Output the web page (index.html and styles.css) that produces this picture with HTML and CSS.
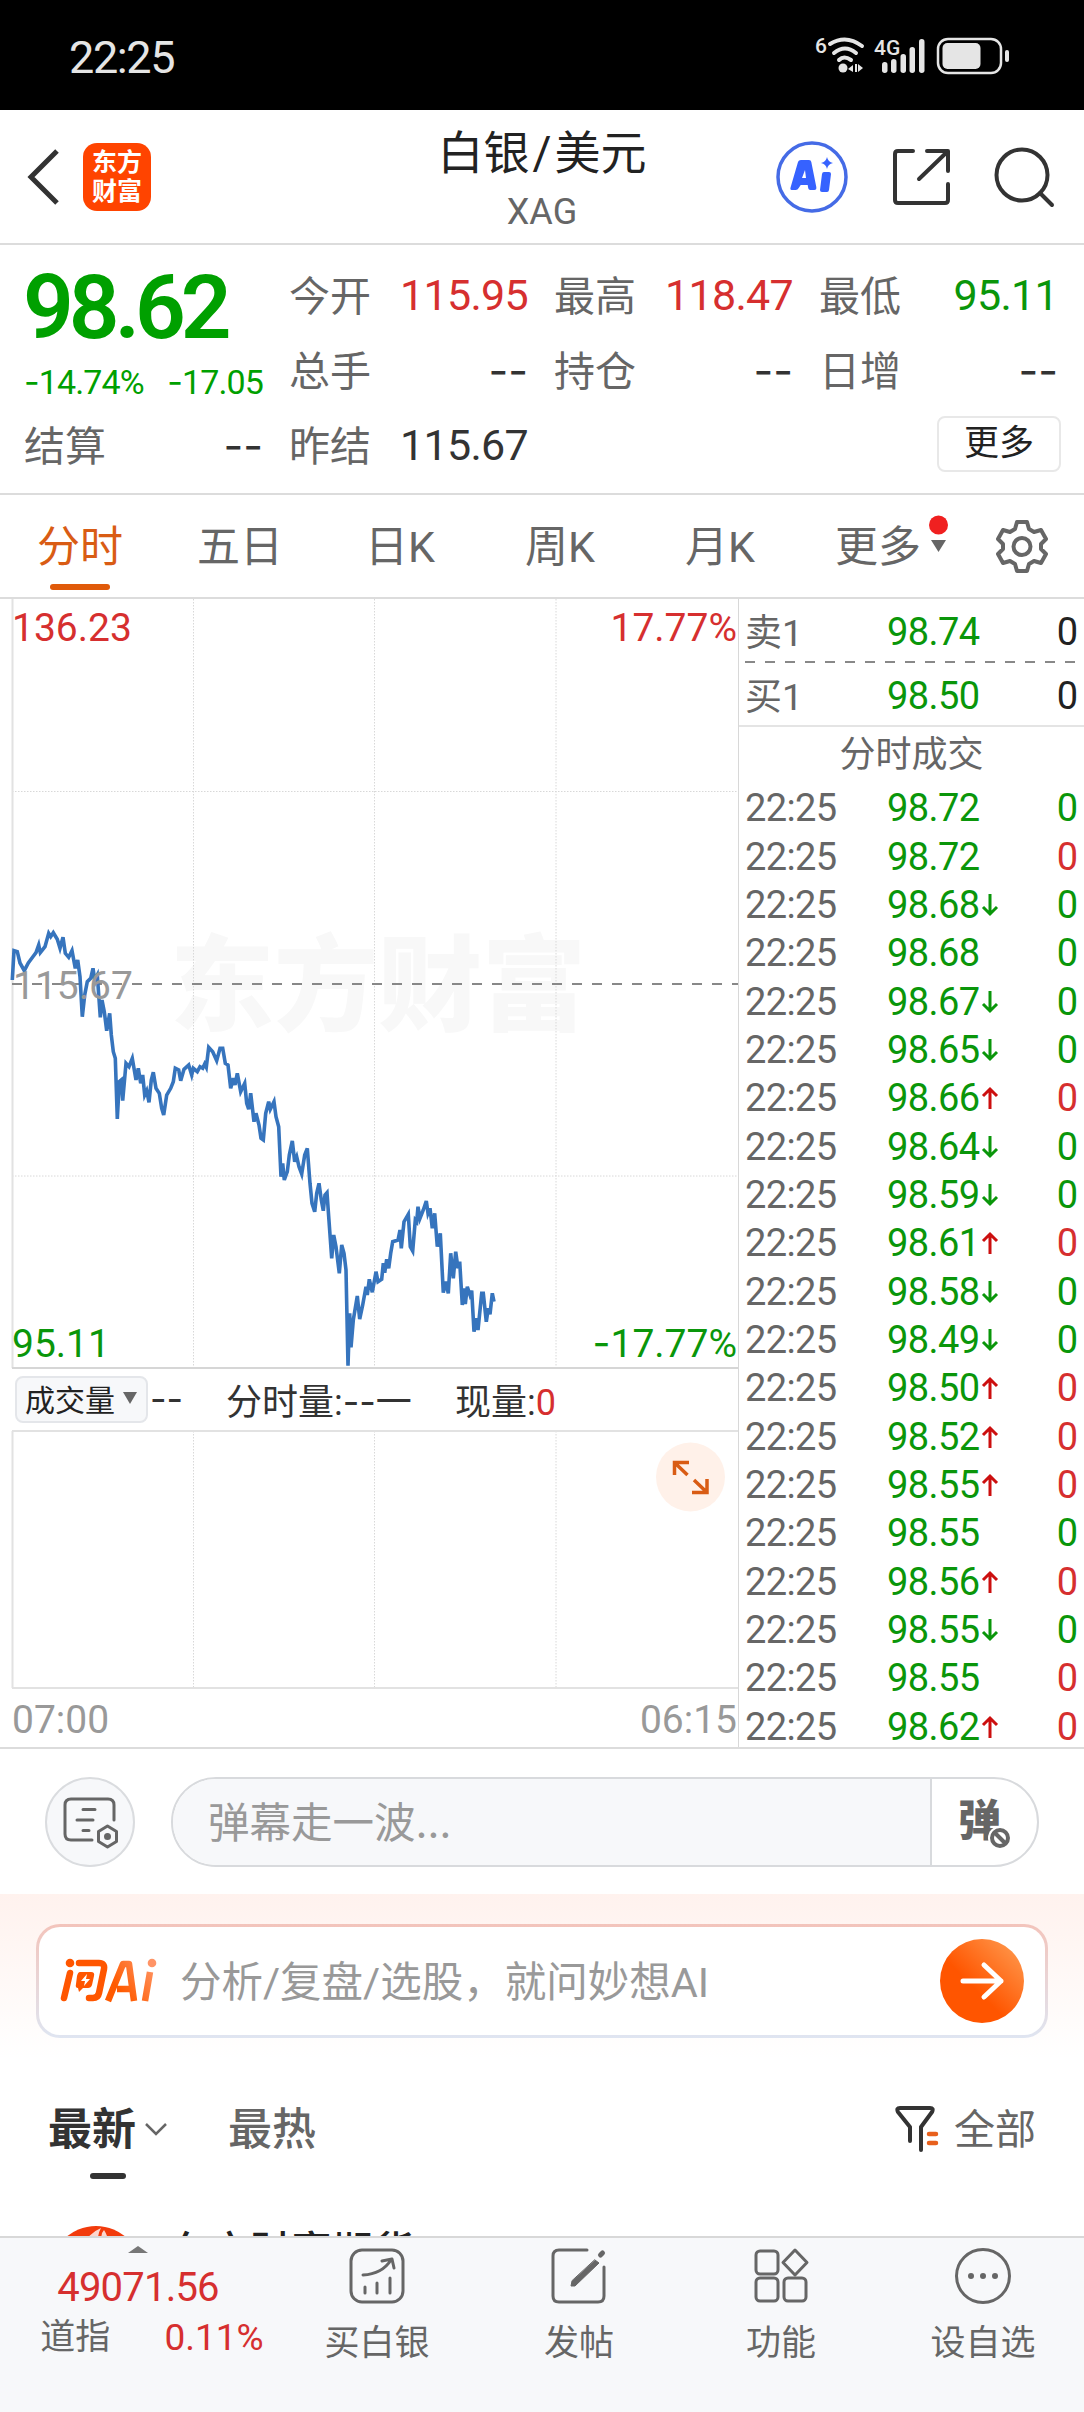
FILE: index.html
```html
<!DOCTYPE html>
<html lang="zh-CN">
<head>
    <meta charset="UTF-8">
    <meta name="viewport" content="width=device-width, initial-scale=1.0">
    <title>白银/美元 XAG</title>
    <link rel="stylesheet" href="styles.css">
</head>
<body>
    <div class="status">
        <span class="clock">22:25</span>
        <svg class="status-icons" width="200" height="44" viewBox="0 0 200 44" fill="#e5e5e5">
            <text x="-2" y="18" font-size="21" class="tiny">6</text>
            <g fill="none" stroke="#e5e5e5" stroke-width="4" stroke-linecap="round">
                <path d="M13 9Q29 -1 45 11M17 18Q28 9 39 18M22 25Q27 20 34 25" />
            </g>
            <circle cx="26" cy="33" r="4.5" />
            <path d="M31 34l5-4v7zM38 29h2v8h-2zM41 29l5 4-5 4z" />
            <text x="57" y="20" font-size="21" class="tiny">4G</text>
            <rect x="65" y="27" width="5.5" height="11" rx="2.7" />
            <rect x="74" y="24" width="5.5" height="14" rx="2.7" />
            <rect x="83.500" y="19" width="5.500" height="19" rx="2.7" />
            <rect x="92.500" y="12" width="5.500" height="26" rx="2.7" />
            <rect x="102" y="4" width="5.500" height="34" rx="2.7" />
            <rect x="121" y="4" width="63" height="34" rx="10" fill="none" stroke="#e5e5e5" stroke-width="2.500" />
            <rect x="125.500" y="8" width="38" height="26" rx="5" />
            <rect x="188" y="15" width="4" height="12" rx="2" />
        </svg>
    </div>

    <div class="header">
        <div class="header-side">
            <svg class="back" width="34" height="56" viewBox="0 0 34 56" fill="none" stroke="#333" stroke-width="5"><path d="M31 2L5 28l26 26" /></svg>
            <div class="logo"><span>东方</span><span>财富</span></div>
        </div>
        <div class="header-title">
            <h1>白银<i>/</i>美元</h1>
            <p>XAG</p>
        </div>
        <div class="header-side right">
            <svg width="72" height="72" viewBox="0 0 72 72" fill="#3662ff">
                <circle cx="36" cy="36" r="34" fill="none" stroke="#456be6" stroke-width="3.500" />
                <path fill-rule="evenodd" d="M25 19h8q2 0 2.300 2l5 25q.5 3-2 3h-4q-2 0-2.300-3l-.3-2h-7l-2 3q-1 2-3 2h-4q-2 0-1-3l7-24q.6-3 3.300-3zM29 29l-3 8h4z" />
                <path d="M48 31h5q2 0 2 2l-2 16q-.3 2-2 2h-5q-2 0-2-2l2-16q.3-2 2-2z" />
                <path d="M51 16q1 5 6 6-5 1-6 6-1-5-6-6 5-1 6-6z" />
            </svg>
            <svg width="60" height="60" viewBox="0 0 60 60" fill="none" stroke="#333" stroke-width="4" stroke-linecap="round" stroke-linejoin="round">
                <path d="M22 4H7q-3 0-3 3v46q0 3 3 3h47q3 0 3-3V37M36 4h21v20M56 5L28 32" />
            </svg>
            <svg width="62" height="62" viewBox="0 0 62 62" fill="none" stroke="#333" stroke-width="4" stroke-linecap="round">
                <circle cx="28" cy="29" r="25.500" /><path d="M46 47l12 12" />
            </svg>
        </div>
    </div>

    <div class="quote">
        <div class="price-block">
            <div class="price">98.62</div>
            <div class="change"><span><i class="minus">-</i>14.74%</span><span><i class="minus">-</i>17.05</span></div>
        </div>
        <div class="field f2"><label>今开</label><b class="up">115.95</b></div>
        <div class="field f3"><label>最高</label><b class="up">118.47</b></div>
        <div class="field f4"><label>最低</label><b class="down">95.11</b></div>
        <div class="field f2"><label>总手</label><b class="dash">--</b></div>
        <div class="field f3"><label>持仓</label><b class="dash">--</b></div>
        <div class="field f4"><label>日增</label><b class="dash">--</b></div>
        <div class="field f1"><label>结算</label><b class="dash">--</b></div>
        <div class="field f2"><label>昨结</label><b>115.67</b></div>
        <button class="more-button">更多</button>
    </div>

    <div class="tabs">
        <span class="tab active">分时</span>
        <span class="tab">五日</span>
        <span class="tab">日K</span>
        <span class="tab">周K</span>
        <span class="tab">月K</span>
        <span class="tab more">更多<svg width="20" height="40" viewBox="0 0 20 40"><circle cx="10.500" cy="10" r="9.500" fill="#f02020" /><path d="M3 25h15l-7.500 12z" fill="#666" /></svg></span>
        <svg class="gear" width="56" height="56" viewBox="0 0 56 56" fill="none" stroke="#666" stroke-width="4" stroke-linejoin="round">
            <path d="M23 4h10l2 7 5 3 7-2 5 9-5 5v5l5 5-5 9-7-2-5 3-2 7H23l-2-7-5-3-7 2-5-9 5-5v-5l-5-5 5-9 7 2 5-3z" />
            <circle cx="28" cy="28.500" r="8.500" />
        </svg>
    </div>

    <div class="market">
        <div class="charts">
            <svg class="line-chart" width="738" height="771" viewBox="0 0 738 771">
                <text x="170" y="424" class="watermark">东方财富</text>
                <path class="grid" d="M193.500 0V769M374.500 0V769M556 0V769M12 192.500H738M12 577H738" />
                <path class="axis" d="M12.500 0V769" />
                <path class="base" d="M12 769H738" />
                <path class="dashed" d="M12 385H738" />
                <polyline class="line" points="12.3,381 14,351.7 17.3,352.7 20,364 24.3,371.7 28.3,364 32.7,358 36,353.7 38.7,346 40.3,353.7 45,347.7 48.7,334.3 50.7,337.7 53.3,333.7 57.3,340.3 60,349.3 63,338.3 65.3,354.3 68.7,358.3 72,351.7 75.3,369.3 77.7,361 80,377.7 82.3,417.7 84.7,396 87.3,382.7 90.7,379.3 93,369.3 94.7,381 97.3,376 100.3,418.3 102,401 104.3,412.7 106.7,431.7 109.7,414.3 111.3,436 113.3,452.7 115.3,459.3 117.3,520 119.3,482.7 121.3,481 122.7,501.7 126,464.3 129,467.7 132.3,459.3 136,481 138.3,469.3 140.7,484.3 142.7,476 144.7,496 146.7,491.7 149,503.3 151.3,481 153.3,473.3 156,489.3 159.3,494.3 161.7,509.3 163.7,516 166.7,496 170.7,489.3 173.3,482.7 175.3,469.3 178.7,471 180.7,481.7 184,470.3 188.7,466 191.7,476 193.3,469.3 197.3,472.7 200,467.7 202.7,469.3 204.7,465 206.3,468.3 208.7,448.3 212.7,452.7 216.7,461.7 220,449.3 222.7,449.3 225.3,464.3 228,466 230.7,489.3 233.3,479.3 235,486 237.3,474.3 240.7,492.7 244.7,484.3 246.7,504.3 248.7,510.3 250.7,494.3 254,522.7 256,514.3 259,526 261,539.3 263.3,541 265.7,514.3 268.7,502.7 270.3,510.3 274,502.7 276,517.7 278.7,527.7 281,577.7 282.7,564.3 284.3,581 287.3,572.7 289.3,556 292.3,542 294.7,562.7 296.7,557.7 299,567.7 301.7,575 304.7,556 307.3,549.3 310,584.3 312,604.3 314.7,612.7 316.7,594.3 319,584.3 321.3,601 323.3,611.7 325,596 327,593.7 328.7,617.7 331.7,659.3 333.7,636 336,647.7 339.3,674.3 341.7,646 344,654.3 346,671 348,766.7 349.7,714.3 351,748.3 353.3,721 357.3,697 359.7,720 362.7,706 366,687.7 367.3,696 369.3,680.3 372.3,693.3 376,672.7 378,682.7 381.7,680.3 383.3,664.3 384.7,673.7 386.7,660.3 388.7,669.3 390.7,654.3 392.7,642.7 398,641 400,631 401.3,649.3 404,622.7 408.3,615.3 410.3,647.7 412.7,652 415.3,621 416.7,622.7 418,607.7 420,619.3 423.3,611 426.3,602 428,614.3 430,609.3 432.3,629.3 434.7,614.3 437.3,647.7 440.3,634.3 443.3,693.7 445.7,682.7 448.3,694.3 450.7,654.3 453.3,679.3 455.7,652.7 458,669.3 459.7,662.7 462.3,706 464,689.3 465.3,705 467.3,687.7 470,696 471.7,691.7 474,732.7 476,719.3 478,731 481.7,694.3 483.3,694.3 486.3,722.7 488.3,709.3 490,715.3 492.3,694.3 494,702.7" />
                <text x="12" y="42" class="num up">136.23</text>
                <text x="737" y="42" class="num up end">17.77%</text>
                <text x="13" y="400" class="num muted">115.67</text>
                <text x="12" y="758" class="num down">95.11</text>
                <text x="737" y="758" class="num down end"><tspan class="minus">-</tspan>17.77%</text>
            </svg>
            <div class="volume-head">
                <span class="select">成交量<i></i></span>
                <span class="vol-dash">--</span>
                <span class="vol-a">分时量:<i>--</i>一</span>
                <span class="vol-b">现量:<em>0</em></span>
            </div>
            <svg class="volume-chart" width="738" height="317" viewBox="0 0 738 317">
                <path class="grid" d="M193.500 1V258M374.500 1V258M556 1V258" />
                <path class="axis" d="M12.500 1V258M12 1H738M12 258H738" />
                <circle cx="690.500" cy="47" r="34.500" fill="#fff1e9" />
                <path d="M674.500 45V32.500H689M676 34l11.500 11M707 49V62.500H692M705.500 61L694 50" fill="none" stroke="#d95c14" stroke-width="3.500" />
                <text x="12" y="303" class="num muted">07:00</text>
                <text x="737" y="303" class="num muted end">06:15</text>
            </svg>
        </div>
        <div class="book">
            <div class="order"><span>卖1</span><b>98.74</b><em>0</em></div>
            <svg class="divider" width="345" height="2"><path d="M6 1H337" stroke="#888" stroke-width="2" stroke-dasharray="10 10" /></svg>
            <div class="order"><span>买1</span><b>98.50</b><em>0</em></div>
            <div class="book-title">分时成交</div>
            <div id="ticks"></div>
        </div>
    </div>

    <div class="danmu">
        <div class="danmu-set">
            <svg width="58" height="54" viewBox="0 0 58 54" fill="none" stroke="#666" stroke-width="3" stroke-linecap="round">
                <path d="M29 43H8q-6 0-6-6V8q0-6 6-6h37q6 0 6 6v15M20 12.500h12M14 23h16M20 33.500h6" />
                <path d="M44.500 29l9 5.500v10l-9 5.500-9-5.500v-10z" stroke-linejoin="round" /><circle cx="44.500" cy="39.500" r="2" fill="#666" />
            </svg>
        </div>
        <div class="danmu-box">
            <div class="danmu-input">弹幕走一波<i>…</i></div>
            <div class="danmu-off">弹<svg width="24" height="24" viewBox="0 0 24 24" fill="#fff"><circle cx="12" cy="12" r="12" /><circle cx="12" cy="12" r="8" stroke="#666" stroke-width="4" /><path d="M7 7l10 10" stroke="#666" stroke-width="4" /></svg></div>
        </div>
    </div>

    <div class="ask">
        <div class="ask-box">
            <svg width="100" height="46" viewBox="0 0 100 46">
                <defs><linearGradient id="ai" gradientUnits="userSpaceOnUse" x1="50" y1="40" x2="98" y2="4"><stop offset="0.200" stop-color="#ff5a00" /><stop offset="1" stop-color="#ff9c70" /></linearGradient></defs>
                <g fill="none" stroke="#ff5600" stroke-width="6.500" stroke-linecap="round" stroke-linejoin="round">
                    <path d="M10 15L4 40M19 5h20q6 0 5 6l-5 24q-1 5-6 5h-4" />
                </g>
                <circle cx="10" cy="5" r="4.300" fill="#ff5600" />
                <path fill="#ff5600" fill-rule="evenodd" d="M20 14h11q4 0 3 4l-2 9q-1 3-4 3h-5l-4 4-1-4q-3 0-2-4l1-8q1-4 3-4zM27 16l-6 7h4l-1 5 6-7h-4z" />
                <g fill="none" stroke="url(#ai)" stroke-width="6.500" stroke-linejoin="round">
                    <path d="M48 43L63 6h6l5 37M57 31h14M90 14l-5 29" />
                </g>
                <circle cx="92" cy="5" r="4.300" fill="#ff9466" />
            </svg>
            <span>分析/复盘/选股，就问妙想AI</span>
            <svg class="go" width="84" height="84" viewBox="0 0 84 84">
                <defs><linearGradient id="go" x1="0.200" y1="0.800" x2="0.900" y2="0.100"><stop offset="0.300" stop-color="#ff5500" /><stop offset="1" stop-color="#ff9448" /></linearGradient></defs>
                <circle cx="42" cy="42" r="42" fill="url(#go)" />
                <path d="M23 42h38M44 26l17 16-17 16" fill="none" stroke="#fff" stroke-width="5" stroke-linecap="round" stroke-linejoin="round" />
            </svg>
        </div>
    </div>

    <div class="feed-tabs">
        <span class="feed-tab on">最新</span>
        <svg class="chev" width="24" height="16" viewBox="0 0 24 16" fill="none" stroke="#666" stroke-width="2.500"><path d="M2 2l10 10L22 2" /></svg>
        <span class="feed-tab">最热</span>
        <span class="filter">
            <svg width="46" height="48" viewBox="0 0 46 48" fill="none" stroke="#333" stroke-width="4" stroke-linecap="round" stroke-linejoin="round">
                <path d="M15 36V22L3 7q-2-4 2-4h30q4 0 2 4L26 22v23" />
                <path d="M34 29h7M34 38h7" stroke="#e8601c" stroke-width="4.500" />
            </svg>
            全部
        </span>
    </div>
    <div class="feed">
        <svg class="avatar" width="94" height="94" viewBox="0 0 94 94"><circle cx="47" cy="47" r="46" fill="#f23b0c" /><path d="M34 20Q40 8 52 3Q48 10 49 20M53 20Q51 9 55 5Q59 11 60 20" fill="#fff" opacity="0.800" /></svg>
        <span>东方财富期货</span>
    </div>

    <div class="navbar">
        <div class="index">
            <i></i>
            <b>49071.56</b>
            <p><span>道指</span><em>0.11%</em></p>
        </div>
        <div class="nav-item">
            <svg width="58" height="58" viewBox="0 0 58 58" fill="none" stroke="#666" stroke-width="3" stroke-linecap="round" stroke-linejoin="round">
                <rect x="3" y="3" width="52" height="52" rx="11" /><path d="M15 28Q34 27 43 13M34 14l10-2 2 9M17 40v6M29 36v10M42 31v15" />
            </svg>
            <p>买白银</p>
        </div>
        <div class="nav-item">
            <svg width="58" height="58" viewBox="0 0 58 58" fill="none" stroke="#666" stroke-width="3" stroke-linecap="round">
                <path d="M37 3H9q-6 0-6 6v40q0 6 6 6h39q6 0 6-6V20" /><path d="M45 13l4 3-24 23-4 0 1-5z" fill="#666" stroke-width="1" /><path d="M50.500 8l2-2" stroke-width="5" />
            </svg>
            <p>发帖</p>
        </div>
        <div class="nav-item">
            <svg width="58" height="58" viewBox="0 0 58 58" fill="none" stroke="#666" stroke-width="3" stroke-linejoin="round">
                <rect x="4" y="4" width="22" height="23" rx="4" /><rect x="4" y="31" width="22" height="23" rx="4" /><rect x="32" y="31" width="22" height="23" rx="4" /><path d="M43 3l12 12.500L43 28 31 15.500z" />
            </svg>
            <p>功能</p>
        </div>
        <div class="nav-item">
            <svg width="58" height="58" viewBox="0 0 58 58" fill="#666">
                <circle cx="29" cy="29" r="26.500" fill="none" stroke="#666" stroke-width="3" /><circle cx="17" cy="29" r="3" /><circle cx="29" cy="29" r="3" /><circle cx="41" cy="29" r="3" />
            </svg>
            <p>设自选</p>
        </div>
    </div>

    <script>
        // 价格, 箭头方向, 成交量颜色
        const ticks = [
            ['98.72', '', 'down'], ['98.72', '', 'up'], ['98.68', 'down', 'down'], ['98.68', '', 'down'],
            ['98.67', 'down', 'down'], ['98.65', 'down', 'down'], ['98.66', 'up', 'up'], ['98.64', 'down', 'down'],
            ['98.59', 'down', 'down'], ['98.61', 'up', 'up'], ['98.58', 'down', 'down'], ['98.49', 'down', 'down'],
            ['98.50', 'up', 'up'], ['98.52', 'up', 'up'], ['98.55', 'up', 'up'], ['98.55', '', 'down'],
            ['98.56', 'up', 'up'], ['98.55', 'down', 'down'], ['98.55', '', 'up'], ['98.62', 'up', 'up']
        ];
        const arrows = {
            down: '<svg width="18" height="24" viewBox="0 0 18 24" fill="none" stroke="#0a960a" stroke-width="3"><path d="M9 1v20M2 14l7 7 7-7" /></svg>',
            up: '<svg width="18" height="24" viewBox="0 0 18 24" fill="none" stroke="#cc0f0f" stroke-width="3"><path d="M9 23V3M2 10l7-7 7 7" /></svg>'
        };
        document.getElementById('ticks').innerHTML = ticks.map(t =>
            `<div class="tick"><span>22:25</span><b>${t[0]}</b>${arrows[t[1]] || ''}<em class="${t[2]}">0</em></div>`
        ).join('');
    </script>
</body>
</html>
```
FILE: styles.css
```css
* {
    box-sizing: border-box;
}
body {
    margin: 0;
    width: 1084px;
    height: 2412px;
    overflow: hidden;
    background-color: #fff;
    color: #333;
    font-family: Roboto, "Noto Sans CJK SC", sans-serif;
}
h1, p {
    margin: 0;
    font-weight: 400;
}
b, em, i {
    font-weight: 400;
    font-style: normal;
}
svg {
    display: block;
    flex: none;
}
.up {
    color: #d62f2f;
    fill: #d62f2f;
}
.down {
    color: #0a960a;
    fill: #0a960a;
}
.minus, .dash, .vol-dash, .vol-a i {
    font-family: Inter, sans-serif;
}

/* 状态栏 */
.status {
    height: 110px;
    padding: 4px 67px 0 69px;
    background-color: #000;
    display: flex;
    justify-content: space-between;
    align-items: center;
}
.status-icons {
    overflow: visible;
}
.clock {
    color: #e5e5e5;
    font-size: 45px;
    letter-spacing: -1.4px;
}
.tiny {
    font-weight: 500;
}

/* 标题 */
.header {
    height: 135px;
    border-bottom: 2px solid #dcdcdc;
    display: flex;
    justify-content: space-between;
}
.header-side {
    width: 320px;
    padding-left: 26px;
    display: flex;
    align-items: center;
}
.header-side.right {
    width: 320px;
    padding: 0 28px 0 0;
    justify-content: flex-end;
    gap: 43px;
}
.logo {
    width: 68px;
    height: 68px;
    margin-left: 23px;
    border-radius: 14px;
    background-color: #ff4400;
    color: #fff;
    font-size: 25px;
    font-weight: 700;
    line-height: 29px;
    display: flex;
    flex-direction: column;
    align-items: center;
    justify-content: center;
}
.header-title {
    text-align: center;
}
.header-title h1 {
    margin-top: 13px;
    color: #222;
    font-size: 46px;
    line-height: 60px;
}
.header-title h1 i {
    padding: 0 3px;
}
.header-title p {
    margin-top: 7px;
    color: #666;
    font-size: 36px;
    line-height: 44px;
}

/* 报价 */
.quote {
    height: 250px;
    padding: 12px 26px 0 24px;
    border-bottom: 2px solid #dcdcdc;
    display: grid;
    grid-template-columns: 239px 239px 239px 239px;
    grid-template-rows: 75px 75px 75px;
    column-gap: 26px;
}
.price-block {
    grid-row: span 2;
    color: #00a000;
}
.price {
    height: 100px;
    margin-left: -1px;
    font-size: 89px;
    font-weight: 600;
    line-height: 102px;
    letter-spacing: -5px;
}
.change {
    margin-top: 3px;
    font-size: 34px;
    line-height: 44px;
    letter-spacing: -0.9px;
    display: flex;
    justify-content: space-between;
    white-space: nowrap;
}
.field {
    display: flex;
    justify-content: space-between;
    align-items: center;
}
.field label {
    margin-top: -3px;
    color: #666;
    font-size: 41px;
}
.field b {
    font-size: 43px;
    letter-spacing: -0.7px;
}
.field .dash {
    letter-spacing: 0;
}
.more-button {
    grid-column: 4;
    justify-self: end;
    width: 124px;
    height: 56px;
    margin: 9px -3px 0 0;
    padding: 0 0 1px;
    border: 2px solid #e8e8e8;
    border-radius: 8px;
    background-color: #fff;
    color: #222;
    font-family: inherit;
    font-size: 35px;
    line-height: 46px;
}

/* 周期 */
.tabs {
    height: 104px;
    border-bottom: 2px solid #dcdcdc;
    padding-right: 34px;
    display: flex;
    align-items: center;
}
.tab {
    width: 160px;
    height: 100%;
    color: #666;
    font-size: 43px;
    line-height: 105px;
    text-align: center;
}
.tab.active {
    color: #d95c14;
    display: flex;
    flex-direction: column;
    align-items: center;
}
.tab.active::after {
    content: "";
    width: 60px;
    height: 6px;
    margin-top: -16px;
    border-radius: 3px;
    background-color: #e05a0a;
}
.tab.more {
    width: auto;
    flex: 1;
    padding-left: 35px;
    display: flex;
    justify-content: flex-start;
}
.tab.more svg {
    margin: 20px 0 0 7px;
}

/* 行情图 */
.market {
    height: 1150px;
    border-bottom: 2px solid #dcdcdc;
    display: flex;
}
.charts {
    width: 738px;
}
.grid {
    fill: none;
    stroke: #d8d8d8;
    stroke-width: 1;
    stroke-dasharray: 1.5 1.5;
}
.axis {
    fill: none;
    stroke: #e2e2e2;
    stroke-width: 2;
}
.base {
    stroke: #d6d6d6;
    stroke-width: 2;
}
.dashed {
    stroke: #888;
    stroke-width: 2;
    stroke-dasharray: 10 10;
}
.line {
    fill: none;
    stroke: #3674bd;
    stroke-width: 3.6;
}
.watermark {
    fill: #f8f8f8;
    font-size: 104px;
    font-weight: 900;
}
.num {
    font-size: 39px;
}
.muted {
    fill: #999;
}
.end {
    text-anchor: end;
}
.volume-head {
    height: 60px;
    padding: 0 0 2px 15px;
    font-size: 36px;
    display: flex;
    align-items: center;
    white-space: nowrap;
}
.select {
    width: 133px;
    height: 47px;
    padding: 0 0 2px 8px;
    border: 2px solid #e4e6ea;
    border-radius: 8px;
    background-color: #f7f8fa;
    color: #222;
    font-size: 30px;
    display: flex;
    align-items: center;
}
.select i {
    margin-left: 8px;
    border: 7px solid transparent;
    border-top: 12px solid #666;
    border-bottom: 0;
}
.vol-dash {
    width: 78px;
    padding-left: 2px;
}
.vol-a {
    width: 229px;
}
.vol-b em {
    color: #d62f2f;
}

/* 盘口 */
.book {
    width: 346px;
    border-left: 1px solid #d8d8d8;
    color: #666;
    font-size: 38px;
}
.order, .tick {
    padding: 0 6px 0 6px;
    display: flex;
    align-items: center;
}
.order {
    height: 62px;
    padding-top: 3px;
}
.order span {
    width: 142px;
    margin-top: -4px;
    font-size: 37px;
}
.order b {
    color: #0a960a;
    letter-spacing: -0.6px;
}
.order em {
    margin-left: auto;
    color: #222;
}
.book-title {
    height: 59px;
    border-top: 2px solid #e4e4e4;
    font-size: 36px;
    line-height: 57px;
    text-align: center;
}
.tick {
    height: 48.35px;
}
.tick span {
    width: 142px;
    letter-spacing: -0.6px;
}
.tick b {
    width: 94px;
    color: #0a960a;
    letter-spacing: -0.6px;
}
.tick em {
    margin-left: auto;
}

/* 弹幕 */
.danmu {
    height: 145px;
    padding: 28px 45px 0;
    display: flex;
    justify-content: space-between;
}
.danmu-set {
    width: 90px;
    height: 90px;
    padding: 3px 0 0 3px;
    border: 2px solid #dadcdf;
    border-radius: 50%;
    background-color: #f7f8fa;
    display: flex;
    align-items: center;
    justify-content: center;
}
.danmu-box {
    width: 868px;
    height: 90px;
    border: 2px solid #d8dadd;
    border-radius: 45px;
    overflow: hidden;
    display: flex;
}
.danmu-input {
    flex: 1;
    padding-left: 35px;
    background-color: #f7f8fa;
    color: #999;
    font-size: 41.5px;
    line-height: 88px;
}
.danmu-input i {
    font-family: Inter, sans-serif;
}
.danmu-off {
    width: 107px;
    padding-left: 26px;
    border-left: 2px solid #d8dadd;
    color: #666;
    font-size: 43px;
    font-weight: 900;
    line-height: 84px;
    display: flex;
}
.danmu-off svg {
    margin: 47px 0 0 -13px;
}

/* 问Ai */
.ask {
    height: 165px;
    padding: 30px 36px 0;
    background: linear-gradient(#fff2ee, #fff);
}
.ask-box {
    height: 114px;
    padding: 0 21px;
    border: 3px solid transparent;
    border-radius: 24px;
    background: linear-gradient(#fff, #fff) padding-box, linear-gradient(#f3c4bb, #dfe5f1) border-box;
    color: #999;
    font-size: 41.5px;
    display: flex;
    align-items: center;
}
.ask-box span {
    margin: 3px 0 0 20px;
    line-height: 60px;
    white-space: nowrap;
}
.ask-box .go {
    margin-left: auto;
}

/* 评论 */
.feed-tabs {
    height: 166px;
    padding: 38px 48px 0;
    display: flex;
    align-items: flex-start;
}
.feed-tab {
    color: #666;
    font-size: 44px;
    font-weight: 500;
    line-height: 66px;
}
.feed-tab.on {
    color: #333;
    font-weight: 700;
    display: flex;
    flex-direction: column;
    align-items: center;
}
.feed-tab.on::after {
    content: "";
    width: 36px;
    height: 6px;
    margin: 10px 0 0 32px;
    border-radius: 3px;
    background-color: #333;
}
.chev {
    margin: 25px 60px 0 8px;
}
.filter {
    margin-left: auto;
    color: #666;
    font-size: 41px;
    line-height: 66px;
    display: flex;
    gap: 13px;
}
.filter svg {
    margin-top: 8px;
}
.feed {
    height: 11px;
    padding-left: 49px;
    overflow: hidden;
    color: #222;
    font-size: 41px;
    font-weight: 500;
    line-height: 55px;
    display: flex;
    gap: 25px;
}

/* 底部导航 */
.navbar {
    height: 176px;
    border-top: 2px solid #d8d8d8;
    background-color: #f7f8fa;
    display: flex;
    color: #666;
    font-size: 35px;
}
.index {
    width: 276px;
    padding-top: 8px;
    color: #d62f2f;
    display: flex;
    flex-direction: column;
    align-items: center;
}
.index i {
    border: 10px solid transparent;
    border-bottom: 7px solid #777;
    border-top: 0;
}
.index b {
    margin-top: 11px;
    font-size: 40px;
    line-height: 48px;
    letter-spacing: -0.8px;
}
.index p {
    margin: 2px 0 0 28px;
    line-height: 48px;
    display: flex;
    gap: 54px;
}
.index p span {
    color: #666;
}
.index p em {
    font-size: 37px;
}
.nav-item {
    width: 202px;
    padding-top: 9px;
    display: flex;
    flex-direction: column;
    align-items: center;
}
.nav-item p {
    margin-top: 14px;
    line-height: 50px;
}
```
